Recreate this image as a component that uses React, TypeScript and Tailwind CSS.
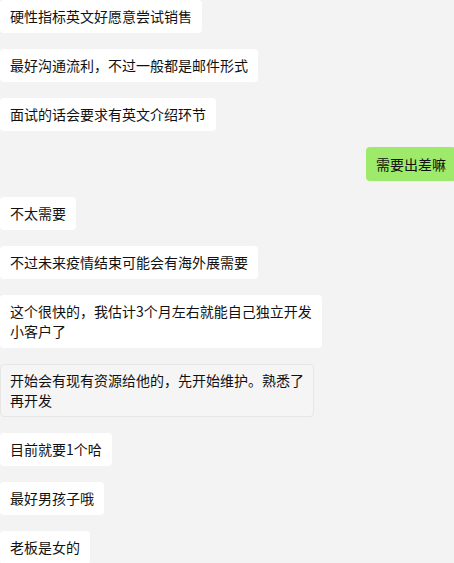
import React from "react";

type Msg = { text: string; side: "l" | "r"; gray?: boolean };

const msgs: Msg[] = [
  { text: "硬性指标英文好愿意尝试销售", side: "l" },
  { text: "最好沟通流利，不过一般都是邮件形式", side: "l" },
  { text: "面试的话会要求有英文介绍环节", side: "l" },
  { text: "需要出差嘛", side: "r" },
  { text: "不太需要", side: "l" },
  { text: "不过未来疫情结束可能会有海外展需要", side: "l" },
  { text: "这个很快的，我估计3个月左右就能自己独立开发\n小客户了", side: "l" },
  { text: "开始会有现有资源给他的，先开始维护。熟悉了\n再开发", side: "l", gray: true },
  { text: "目前就要1个哈", side: "l" },
  { text: "最好男孩子哦", side: "l" },
  { text: "老板是女的", side: "l" },
];

export default function App() {
  return (
    <div
      className="w-[454px] h-[563px] overflow-hidden bg-[#f3f3f3] flex flex-col gap-[16px] text-[14px] leading-[20px] text-[#111111]"
      style={{ fontFamily: '"Microsoft YaHei", "Noto Sans CJK SC", sans-serif' }}
    >
      {msgs.map((m, i) =>
        m.side === "r" ? (
          <div key={i} className="flex justify-end mr-[-2px]">
            <div className="bg-[#9eea6a] rounded-[4px] px-[10px] pt-[7px] pb-[7px]">{m.text}</div>
          </div>
        ) : (
          <div key={i} className="flex justify-start">
            <div
              className={
                m.gray
                  ? "whitespace-pre-line bg-[#f5f5f5] border border-[#e6e6e6] rounded-[4px] px-[9px] pt-[5px] pb-[6px]"
                  : "whitespace-pre-line bg-white rounded-[4px] px-[10px] pt-[6px] pb-[7px]"
              }
            >
              {m.text}
            </div>
          </div>
        )
      )}
    </div>
  );
}
